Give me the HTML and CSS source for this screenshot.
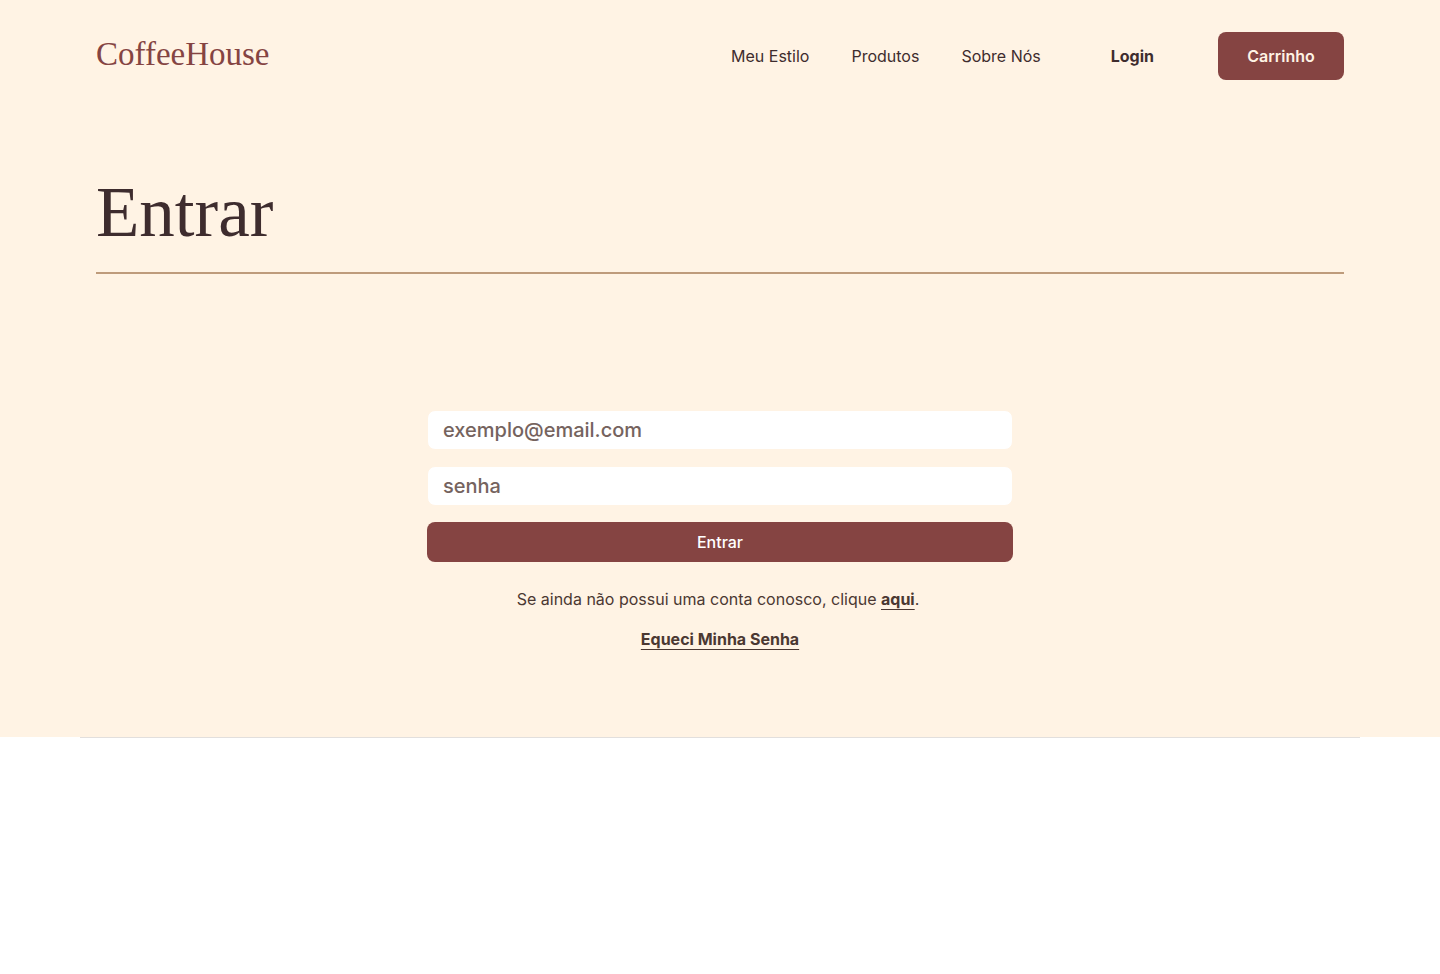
FILE: index.html
```html
<!DOCTYPE html>
<html lang="pt-BR">
<head>
  <meta charset="utf-8">
  <meta name="viewport" content="width=device-width, initial-scale=1">
  <title>CoffeeHouse</title>
  <link rel="stylesheet" href="styles.css">
</head>
<body>
  <div class="page">
    <header class="header">
      <a class="logo" href="#">CoffeeHouse</a>
      <nav class="nav">
        <div class="nav-links">
          <a class="nav-link" href="#">Meu Estilo</a>
          <a class="nav-link" href="#">Produtos</a>
          <a class="nav-link" href="#">Sobre Nós</a>
        </div>
        <a class="login" href="#">Login</a>
        <button class="cart" type="button">Carrinho</button>
      </nav>
    </header>
    <main class="content">
      <h1 class="title">Entrar</h1>
      <form class="form">
        <input class="field" type="email" placeholder="exemplo@email.com" aria-label="E-mail">
        <input class="field" type="password" placeholder="senha" aria-label="Senha">
        <button class="submit" type="submit">Entrar</button>
      </form>
      <div class="help">
        <p class="signup">Se ainda não possui uma conta conosco, clique <a class="link" href="#">aqui</a>.</p>
        <a class="link" href="#">Equeci Minha Senha</a>
      </div>
    </main>
  </div>
  <hr class="divider">
</body>
</html>
```
FILE: styles.css
```css
* {
  box-sizing: border-box;
}

body {
  margin: 0;
  background: #ffffff;
  color: #3e2c2e;
  font-family: Inter, sans-serif;
  font-size: 16px;
  line-height: 24px;
}

.page {
  padding: 32px 96px 86px;
  background: #fff3e4;
}

.header {
  display: flex;
  align-items: center;
  justify-content: space-between;
}

.logo {
  padding-bottom: 4px;
  color: #854442;
  font-family: "Liberation Serif", serif;
  font-size: 33px;
  line-height: 40px;
  text-decoration: none;
}

.nav {
  display: flex;
  align-items: center;
  gap: 64px;
}

.nav-links {
  display: flex;
  gap: 42px;
  padding-right: 6px;
}

.nav-link,
.login {
  color: inherit;
  text-decoration: none;
}

.login {
  font-weight: 700;
}

.cart,
.submit {
  border: 0;
  border-radius: 8px;
  background: #854442;
  color: #fff3e4;
  font: inherit;
  cursor: pointer;
}

.cart {
  width: 126px;
  height: 48px;
  font-weight: 600;
}

.title {
  margin: 88px 0 0;
  padding-bottom: 16px;
  border-bottom: 2px solid #be9b7b;
  font-family: "Liberation Serif", serif;
  font-size: 71px;
  font-weight: 400;
  line-height: 88px;
}

.form {
  display: flex;
  flex-direction: column;
  gap: 16px;
  width: 100%;
  max-width: 586px;
  margin: 136px auto 0;
}

.field {
  width: 100%;
  height: 40px;
  padding: 0 15px;
  border: 1px solid #fff3e4;
  border-radius: 8px;
  background: #ffffff;
  color: #4b3832;
  font: inherit;
  font-size: 20px;
  font-weight: 500;
}

.field::placeholder {
  color: #75635e;
  opacity: 1;
}

.submit {
  height: 40px;
  color: #ffffff;
  font-weight: 500;
}

.help {
  display: flex;
  flex-direction: column;
  align-items: center;
  gap: 16px;
  margin-top: 25px;
  color: #4b3832;
}

.signup {
  margin: 0;
  padding-right: 4px;
}

.link {
  color: inherit;
  font-weight: 700;
  text-decoration: underline;
  text-underline-position: under;
}

.divider {
  height: 1px;
  margin: 0 80px;
  border: 0;
  background: #e2dfdd;
}
```
